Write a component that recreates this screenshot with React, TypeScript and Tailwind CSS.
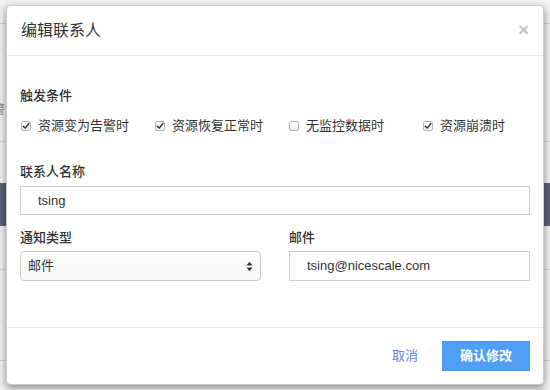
const cjk = "font-['Liberation_Sans','Noto_Sans_CJK_SC',sans-serif]"

const triggers = [
  { label: '资源变为告警时', checked: true },
  { label: '资源恢复正常时', checked: true },
  { label: '无监控数据时', checked: false },
  { label: '资源崩溃时', checked: true },
]

const Checkbox = ({ checked }: { checked: boolean }) => (
  <span className="relative mr-[7px] inline-flex h-[10px] w-[10px] shrink-0 items-center justify-center rounded-[2px] border border-[#b5b5b5] bg-gradient-to-b from-white to-[#ececec]">
    {checked && (
      <svg viewBox="0 0 10 10" className="h-[8px] w-[8px]">
        <path d="M1.5 5.2 L4 7.6 L8.6 1.8" fill="none" stroke="#333" strokeWidth="1.8" strokeLinecap="round" strokeLinejoin="round" />
      </svg>
    )}
  </span>
)

export default function App() {
  return (
    <div className={`relative h-[390px] w-[550px] overflow-hidden bg-[#f3f3f3] ${cjk}`}>
      {/* page behind the dialog */}
      <div className="flex flex-col">
        <div className="h-[24px] border-b border-[#d8d8d8]" />
        <div className="flex h-[118px] items-end border-b border-[#d8d8d8] pb-[22px] text-[12px] text-[#888]">
          <span className="-ml-[7px]">警</span>
        </div>
        <div className="h-[41px]" />
        <div className="h-[43px] bg-[#5c6279]" />
        <div className="h-[44px] border-b border-[#d8d8d8]" />
        <div className="h-[91px] border-b border-[#d8d8d8]" />
      </div>

      {/* dialog */}
      <div className="absolute left-[6px] top-[5px] flex h-[380px] w-[538px] flex-col rounded-[5px] border border-black/20 bg-white shadow-[0_3px_9px_rgba(0,0,0,0.45)]">
        <div className="flex h-[50px] shrink-0 items-center justify-between border-b border-[#e5e5e5] pl-[14px] pr-[14px]">
          <h1 className="text-[16px] leading-none text-[#333]">编辑联系人</h1>
          <span className="-mt-[2px] text-[19px] font-bold leading-none text-[#c4c4c4]">×</span>
        </div>

        <div className="flex-1 px-[13px] pt-[31px] text-[13px] text-[#333]">
          <div className="h-[18px] font-medium leading-[18px]">触发条件</div>
          <div className="mt-[12px] flex h-[18px] items-center leading-[18px]">
            {triggers.map(t => (
              <label key={t.label} className="flex w-[134px] shrink-0 items-center pl-[1px]">
                <Checkbox checked={t.checked} />
                <span>{t.label}</span>
              </label>
            ))}
          </div>

          <div className="mt-[28px] h-[18px] font-medium leading-[18px]">联系人名称</div>
          <div className="mt-[5px] flex h-[29px] items-center border border-[#cccccc] pl-[17px] text-[13px] text-[#333]">
            tsing
          </div>

          <div className="mt-[14px] grid grid-cols-2 gap-x-[28px]">
            <div>
              <div className="h-[18px] font-medium leading-[18px]">通知类型</div>
              <div className="mt-[4px] flex h-[30px] items-center justify-between rounded-[4px] border border-[#c8c8c8] bg-gradient-to-b from-white to-[#f7f7f7] pl-[7px] pr-[7px]">
                <span>邮件</span>
                <svg viewBox="0 0 8 12" className="h-[11px] w-[7px]">
                  <path d="M4 0.5 L7.5 4.8 L0.5 4.8 Z" fill="#333" />
                  <path d="M4 11.5 L7.5 7.2 L0.5 7.2 Z" fill="#333" />
                </svg>
              </div>
            </div>
            <div>
              <div className="h-[18px] font-medium leading-[18px]">邮件</div>
              <div className="mt-[4px] flex h-[30px] items-center border border-[#cccccc] pl-[17px]">
                tsing@nicescale.com
              </div>
            </div>
          </div>
        </div>

        <div className="flex h-[57px] shrink-0 items-center justify-end gap-[24px] border-t border-[#e5e5e5] pr-[13px] text-[13px]">
          <span className="text-[#6683e3]">取消</span>
          <button className="h-[30px] w-[88px] border border-[#4a95f3] bg-[#519ef8] font-bold text-white">
            确认修改
          </button>
        </div>
      </div>
    </div>
  )
}
